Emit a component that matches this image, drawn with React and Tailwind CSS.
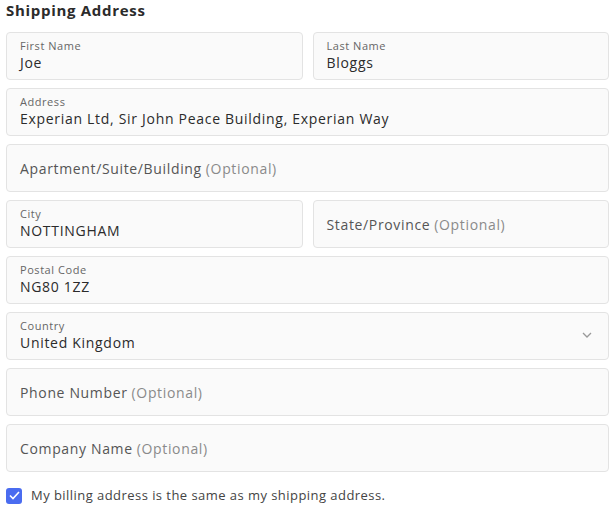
import React from 'react';

const font = { fontFamily: '"Open Sans", "Liberation Sans", sans-serif' };

const Field = ({ label, value, className = '' }) => (
  <div className={`h-12 rounded border border-[#e3e3e3] bg-[#fafafa] px-[13px] pt-[6px] ${className}`}>
    <div className="text-[11px] leading-[14px] tracking-[0.55px] text-[#666]">{label}</div>
    <div className="text-[14px] leading-[20px] tracking-[0.7px] text-[#2b2b2b]">{value}</div>
  </div>
);

const Placeholder = ({ label, className = '' }) => (
  <div className={`flex h-12 items-center rounded border border-[#e3e3e3] bg-[#fafafa] px-[13px] text-[14px] tracking-[0.65px] ${className}`}>
    <span className="text-[#555]">{label}</span>
    <span className="ml-1 text-[#8a8a8a]">(Optional)</span>
  </div>
);

export default function App() {
  return (
    <div className="w-[615px] bg-white px-[6px] pt-0" style={font}>
      <h2 className="h-[32px] pt-[1px] text-[15px] font-bold leading-[18px] tracking-[0.7px] text-[#2b2b2b]">Shipping Address</h2>
      <div className="flex flex-col gap-2">
        <div className="grid grid-cols-2 gap-[10px]">
          <Field label="First Name" value="Joe" />
          <Field label="Last Name" value="Bloggs" />
        </div>
        <Field label="Address" value="Experian Ltd, Sir John Peace Building, Experian Way" />
        <Placeholder label="Apartment/Suite/Building" />
        <div className="grid grid-cols-2 gap-[10px]">
          <Field label="City" value="NOTTINGHAM" />
          <Placeholder label="State/Province" />
        </div>
        <Field label="Postal Code" value="NG80 1ZZ" />
        <div className="flex h-12 items-center rounded border border-[#e3e3e3] bg-[#fafafa] pl-[13px] pr-[16px]">
          <div className="flex-1 self-start pt-[6px]">
            <div className="text-[11px] leading-[14px] tracking-[0.55px] text-[#666]">Country</div>
            <div className="text-[14px] leading-[20px] tracking-[0.7px] text-[#2b2b2b]">United Kingdom</div>
          </div>
          <svg width="10" height="6" viewBox="0 0 10 6" fill="none" className="mb-[2px]">
            <path d="M1 1l4 4 4-4" stroke="#999" strokeWidth="1.3" />
          </svg>
        </div>
        <Placeholder label="Phone Number" />
        <Placeholder label="Company Name" />
      </div>
      <label className="mt-[14px] flex items-center gap-[9px]">
        <span className="flex h-4 w-4 items-center justify-center rounded-[3px] bg-[#4a6cf0]">
          <svg width="11" height="9" viewBox="0 0 11 9" fill="none">
            <path d="M1 4.5l3 3L10 1" stroke="white" strokeWidth="1.6" />
          </svg>
        </span>
        <span className="text-[13px] tracking-[0.45px] text-[#444]">My billing address is the same as my shipping address.</span>
      </label>
    </div>
  );
}
